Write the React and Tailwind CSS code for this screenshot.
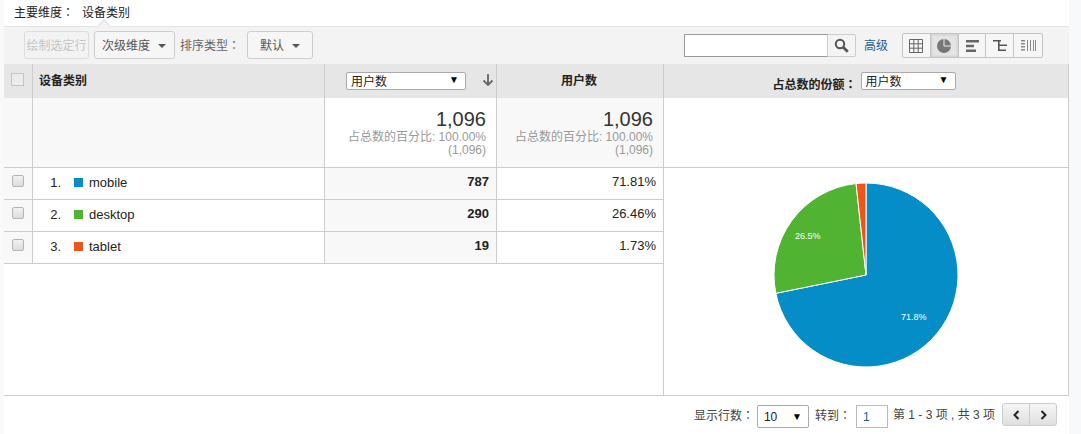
import React from "react";

const font = { fontFamily: '"Liberation Sans","Noto Sans CJK SC",Arial,sans-serif' };
const Colon = () => <span className="font-['Noto_Sans_CJK_TC']">：</span>;
const Caret = ({ c = "border-t-[#555]" }) => (
  <span className={`inline-block w-0 h-0 border-x-[4px] border-x-transparent border-t-[4px] ${c}`} />
);
const Sel = ({ w, label, cls = "" }) => (
  <div className={`flex items-center justify-between bg-white border border-[#aaa] rounded-[2px] h-[18px] pl-[4px] pr-[6px] text-[12px] leading-none text-[#222] ${w} ${cls}`}>
    <span className="mt-[2px]">{label}</span>
    <span className="text-[10px] text-black -mt-[3px]">▼</span>
  </div>
);
const Check = () => (
  <span className="block w-[12px] h-[12px] rounded-[2px] border border-[#b5b5b5] bg-gradient-to-b from-[#f2f2f2] to-[#dcdcdc]" />
);

function Arc({ start, end, color }) {
  const r = 92, cx = 93, cy = 93;
  const p = (a) => {
    const t = ((a - 90) * Math.PI) / 180;
    return `${cx + r * Math.cos(t)} ${cy + r * Math.sin(t)}`;
  };
  return (
    <path
      d={`M${cx} ${cy}L${p(start)}A${r} ${r} 0 ${end - start > 180 ? 1 : 0} 1 ${p(end)}Z`}
      fill={color}
      stroke="#fff"
      strokeWidth="1"
    />
  );
}

const Row = ({ n, color, name, v, pct }) => (
  <div className="flex h-[32px] border-b border-[#ccc] text-[13px] text-[#222]">
    <div className="w-[29px] shrink-0 bg-[#f8f8f8] border-r border-[#ccc] flex justify-center pt-[7px]">
      <Check />
    </div>
    <div className="w-[292px] shrink-0 border-r border-[#ccc] bg-white flex items-center pb-[2px]">
      <span className="w-[41px] text-right pr-[13px]">{n}.</span>
      <span className={`w-[9px] h-[9px] ${color} mr-[6px]`} />
      <span>{name}</span>
    </div>
    <div className="w-[172px] shrink-0 border-r border-[#ccc] bg-[#f8f8f8] text-right pr-[7px] font-bold leading-[28px]">{v}</div>
    <div className="w-[166px] shrink-0 bg-white text-right pr-[7px] leading-[28px]">{pct}</div>
  </div>
);

const Total = ({ bg }) => (
  <div className={`pt-[9px] pr-[10px] text-right ${bg}`}>
    <div className="text-[20px] leading-[24px] text-[#333]">1,096</div>
    <div className="text-[12px] leading-[13px] text-[#999]">占总数的百分比: 100.00%</div>
    <div className="text-[12px] leading-[13px] text-[#999]">(1,096)</div>
  </div>
);

const ViewIcon = ({ children, active }) => (
  <div className={`w-[28px] h-[23px] flex items-center justify-center border-r border-[#c4c4c4] last:border-r-0 ${active ? "bg-[#e4e4e4] shadow-[inset_0_0_3px_#bbb]" : ""}`}>
    {children}
  </div>
);

export default function App() {
  return (
    <div style={font} className="w-[1081px] h-[434px] bg-[#f8f9fb] pl-[4px] pr-[12px] overflow-hidden">
      <div className="w-[1065px] h-[434px] bg-white flex flex-col">
        <div className="relative h-[27px] border-b border-[#e4e4e4] flex items-center pl-[10px] pb-[1px] text-[12px] text-[#222] shrink-0">
          <span className="mr-[8px]">主要维度<Colon /></span>
          <span>设备类别</span>
          <span className="absolute left-[96px] top-[21px] w-[8px] h-[8px] rotate-45 bg-[#f3f3f3] border-l border-t border-[#ddd]" />
        </div>

        <div className="h-[37px] bg-[#f3f3f3] flex items-center pb-[1px] text-[12px] shrink-0 relative">
          <div className="ml-[20px] w-[65px] h-[28px] pt-[1px] border border-[#ddd] rounded-[3px] flex items-center justify-center text-[#c4c4c4]">绘制选定行</div>
          <div className="ml-[5px] w-[81px] h-[28px] pt-[1px] border border-[#ccc] rounded-[3px] flex items-center justify-between pl-[7px] pr-[8px] text-[#555] bg-[#f6f6f6]">
            <span>次级维度</span>
            <Caret />
          </div>
          <span className="ml-[5px] mt-[1px] text-[#666] w-[63px]">排序类型<Colon /></span>
          <div className="ml-[4px] w-[66px] h-[28px] pt-[1px] border border-[#ccc] rounded-[3px] flex items-center justify-between pl-[12px] pr-[12px] text-[#555] bg-[#f6f6f6]">
            <span>默认</span>
            <Caret />
          </div>
          <div className="ml-auto mr-[26px] flex items-center">
            <div className="w-[144px] h-[23px] mt-[1px] bg-white border border-[#999] border-r-[#ccc]" />
            <div className="w-[28px] h-[23px] mt-[1px] bg-[#f4f4f4] border border-l-0 border-[#ccc] rounded-r-[2px] flex items-center justify-center">
              <svg width="15" height="15" viewBox="0 0 15 15" fill="none" stroke="#555">
                <circle cx="6" cy="6" r="4.2" strokeWidth="2" />
                <path d="M9.2 9.2l4.6 4.6" strokeWidth="2.8" />
              </svg>
            </div>
            <a className="text-[#1a5b9c] ml-[8px] mr-[14px] mt-[1px] w-[24px]">高级</a>
            <div className="flex border border-[#c4c4c4] rounded-[2px] h-[25px] mt-[1px] bg-[#f6f6f6] w-[141px]">
              <ViewIcon>
                <svg width="14" height="14" viewBox="0 0 14 14" fill="none" stroke="#666">
                  <path d="M.5.5h13v13H.5zM4.8.5v13M9.2.5v13M.5 4.8h13M.5 9.2h13" />
                </svg>
              </ViewIcon>
              <ViewIcon active>
                <svg width="14" height="14" viewBox="0 0 14 14">
                  <circle cx="7" cy="7" r="7" fill="#777" />
                  <path d="M7 0v7h7" fill="none" stroke="#eee" strokeWidth="1" />
                </svg>
              </ViewIcon>
              <ViewIcon>
                <svg width="13" height="12" viewBox="0 0 13 12" fill="#666" className="ml-[2px]">
                  <path d="M0 0h13v2.6H0zM0 4.7h8v2.6H0zM0 9.4h10V12H0z" />
                </svg>
              </ViewIcon>
              <ViewIcon>
                <svg width="14" height="13" viewBox="0 0 14 13" fill="#555" className="ml-[1px]">
                  <path d="M0 1h8v1.6H0zM6 5.5h8v1.6H6zM6 10.4h7V12H6zM5 1h1.6v11H5z" />
                </svg>
              </ViewIcon>
              <ViewIcon>
                <svg width="15" height="11" viewBox="0 0 15 11" fill="#777">
                  <path d="M0 0h4v1.5H0zM0 3h4v1.5H0zM0 6h4v1.5H0zM0 9h4v1.5H0zM6 0h1v11H6zM9 0h1v11H9zM12 0h1v11h-1zM14 0h1v11h-1z" opacity=".85" />
                </svg>
              </ViewIcon>
            </div>
          </div>
        </div>

        <div className="flex flex-1 min-h-0">
          <div className="w-[659px] shrink-0 flex flex-col">
            <div className="flex h-[34px] bg-[#e6e6e6] shrink-0">
              <div className="w-[29px] shrink-0 border-r border-[#ccc] flex justify-center pt-[9px] pr-[1px]">
                <span className="block w-[13px] h-[13px] border border-[#c4c4c4] bg-[#ececec]" />
              </div>
              <div className="w-[292px] shrink-0 border-r border-[#ccc] pl-[6px] pt-[9px] text-[12px] font-bold text-[#222] leading-[16px]">设备类别</div>
              <div className="w-[172px] shrink-0 border-r border-[#ccc] pl-[21px] pt-[8px] flex">
                <Sel w="w-[120px]" label="用户数" />
                <svg className="ml-[16px] mt-[2px]" width="12" height="12" viewBox="0 0 12 12" fill="none" stroke="#666" strokeWidth="1.8">
                  <path d="M6 0v10.5M1.5 6.5L6 11l4.5-4.5" />
                </svg>
              </div>
              <div className="w-[166px] shrink-0 flex justify-center pt-[9px] pr-[2px] text-[12px] font-bold text-[#222] leading-[16px]">用户数</div>
            </div>
            <div className="flex h-[70px] border-b border-[#ccc] shrink-0">
              <div className="w-[29px] shrink-0 bg-[#f8f8f8] border-r border-[#ccc]" />
              <div className="w-[292px] shrink-0 bg-[#f8f8f8] border-r border-[#ccc]" />
              <div className="w-[172px] shrink-0 border-r border-[#ccc]"><Total bg="bg-white h-full" /></div>
              <div className="w-[166px] shrink-0"><Total bg="bg-[#f8f8f8] h-full" /></div>
            </div>
            <Row n={1} color="bg-[#058dc7]" name="mobile" v="787" pct="71.81%" />
            <Row n={2} color="bg-[#50b432]" name="desktop" v="290" pct="26.46%" />
            <Row n={3} color="bg-[#ed561b]" name="tablet" v="19" pct="1.73%" />
          </div>

          <div className="flex-1 border-l border-[#ccc] border-r flex flex-col">
            <div className="h-[34px] bg-[#e6e6e6] flex items-start justify-center pt-[8px] pr-[4px] text-[12px] font-bold text-[#222] shrink-0">
              <span className="mt-[3px] mr-[4px]">占总数的份额<Colon /></span>
              <Sel w="w-[95px]" label="用户数" cls="font-normal" />
            </div>
            <div className="h-[70px] border-b border-[#ccc] shrink-0" />
            <div className="relative flex-1 flex justify-center pt-[14px]">
              <svg width="186" height="186" viewBox="0 0 186 186">
                <Arc start={0} end={258.5} color="#058dc7" />
                <Arc start={258.5} end={353.8} color="#50b432" />
                <Arc start={353.8} end={360} color="#ed561b" />
                <text x="128" y="138" fontSize="9" fill="#fff" textAnchor="start">71.8%</text>
                <text x="22" y="57" fontSize="9" fill="#fff" textAnchor="start">26.5%</text>
              </svg>
            </div>
          </div>
        </div>

        <div className="h-[39px] border-t border-[#ccc] flex items-center justify-end pr-[12px] text-[12px] text-[#444] shrink-0">
          <span>显示行数<Colon /></span>
          <div className="ml-[3px] mt-[3px] w-[52px] h-[23px] border border-[#aaa] rounded-[2px] bg-white flex items-center justify-between pl-[6px] pr-[6px] text-[#222]">
            <span>10</span>
            <span className="text-[10px] text-black">▼</span>
          </div>
          <span className="ml-[6px]">转到<Colon /></span>
          <div className="ml-[5px] mt-[3px] w-[32px] h-[23px] border border-[#bbb] bg-white flex items-center pl-[6px] text-[#1a5b9c]">1</div>
          <span className="ml-[5px] whitespace-pre">第 1 - 3 项 , 共 3 项</span>
          <div className="ml-[7px] w-[55px] h-[23px] -mt-[1px] border border-[#ccc] rounded-[3px] bg-gradient-to-b from-[#f5f5f5] to-[#e0e0e0] flex">
            <div className="flex-1 flex items-center justify-center border-r border-[#ccc]">
              <svg width="7" height="10" viewBox="0 0 7 10" fill="none" stroke="#222" strokeWidth="2"><path d="M5.5 1L1.5 5l4 4" /></svg>
            </div>
            <div className="flex-1 flex items-center justify-center">
              <svg width="7" height="10" viewBox="0 0 7 10" fill="none" stroke="#222" strokeWidth="2"><path d="M1.5 1l4 4-4 4" /></svg>
            </div>
          </div>
        </div>
      </div>
    </div>
  );
}
